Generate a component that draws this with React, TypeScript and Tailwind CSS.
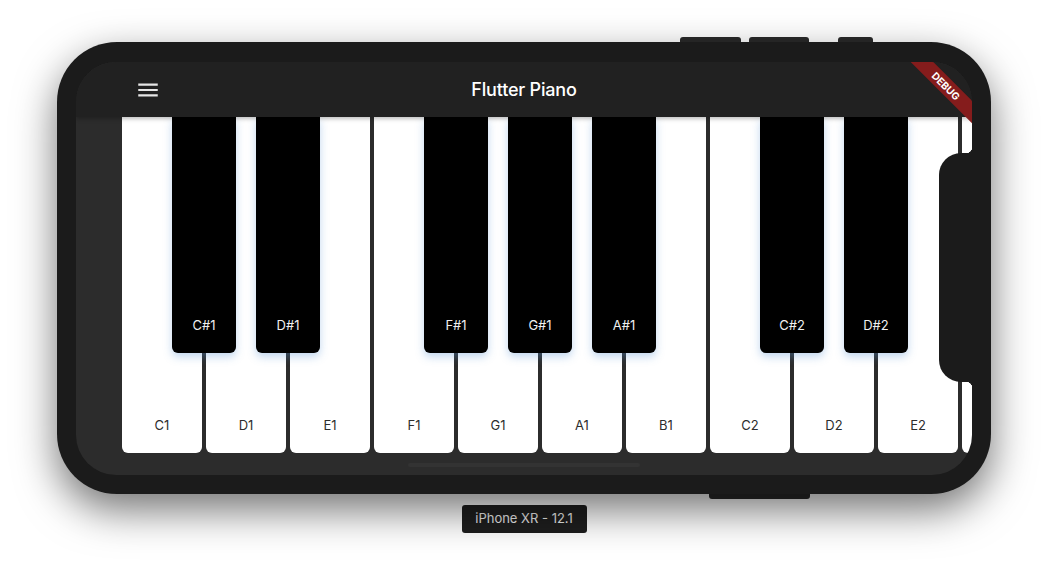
const whites = ["C1", "D1", "E1", "F1", "G1", "A1", "B1", "C2", "D2", "E2", ""]
const blacks: Record<string, string> = {
    C1: "C#1",
    D1: "D#1",
    F1: "F#1",
    G1: "G#1",
    A1: "A#1",
    C2: "C#2",
    D2: "D#2",
}

const MenuIcon = () => (
    <svg width="26" height="26" viewBox="0 0 24 24" fill="#e6e6e6">
        <path d="M3 18h18v-2H3v2zm0-5h18v-2H3v2zm0-7v2h18V6H3z"/>
    </svg>
)

const WhiteKey = ({note}: { note: string }) => {
    const sharp = blacks[note]
    return (
        <div className="relative w-[80px] h-[336px] shrink-0 bg-white rounded-b-[6px] flex items-end justify-center pb-[20px]">
            <span className="text-[13px] leading-4 text-[#2d2d2d]">{note}</span>
            {sharp &&
                <div
                    className="absolute top-0 left-[50px] z-10 w-[64px] h-[236px] bg-black rounded-b-[6px] flex items-end justify-center pb-[20px] shadow-[0_4px_8px_rgba(80,140,210,0.35)]">
                    <span className="text-[13px] leading-4 text-[#f0f0f0]">{sharp}</span>
                </div>
            }
        </div>
    )
}

const App = () => {
    return (
        <div className="w-[1048px] h-[584px] bg-white overflow-hidden pt-[42px] pl-[57px]"
             style={{fontFamily: "Inter, Roboto, 'Noto Sans', sans-serif"}}>
            <div className="relative w-[934px] h-[452px]">
                {/* side buttons */}
                <div className="absolute top-[-5px] left-[623px] w-[61px] h-[6px] bg-[#2a2a2a] rounded-t-[3px]"/>
                <div className="absolute top-[-5px] left-[692px] w-[60px] h-[6px] bg-[#2a2a2a] rounded-t-[3px]"/>
                <div className="absolute top-[-5px] left-[781px] w-[35px] h-[6px] bg-[#2a2a2a] rounded-t-[3px]"/>
                <div className="absolute bottom-[-5px] left-[652px] w-[101px] h-[6px] bg-[#2a2a2a] rounded-b-[3px]"/>

                <div
                    className="relative w-full h-full bg-[#1b1b1b] rounded-[60px] pt-[20px] pl-[19px] pr-[19px] pb-[19px] shadow-[0_16px_42px_rgba(0,0,0,0.55)]">
                    <div className="relative w-full h-full rounded-[40px] overflow-hidden bg-[#2c2c2c] flex flex-col">
                        <div className="relative h-[55px] shrink-0 bg-[#212121] flex items-center shadow-[0_2px_4px_rgba(0,0,0,0.25)] z-20">
                            <div className="ml-[59px] flex">
                                <MenuIcon/>
                            </div>
                            <div className="absolute inset-0 flex items-center justify-center">
                                <span className="text-[18px] font-medium text-white tracking-[-0.2px]">Flutter Piano</span>
                            </div>
                            <div className="absolute top-0 right-0 w-[80px] h-[80px] overflow-hidden">
                                <div
                                    className="absolute left-[4px] top-[16px] w-[100px] h-[16px] rotate-45 bg-[#851c1c] flex items-center justify-center">
                                    <span className="text-[10px] leading-none font-bold text-white">DEBUG</span>
                                </div>
                            </div>
                        </div>

                        <div className="flex-1 flex gap-1 pl-[46px] overflow-hidden">
                            {whites.map((n, i) => <WhiteKey key={i} note={n}/>)}
                        </div>

                        <div className="absolute bottom-[8px] left-1/2 -translate-x-1/2 w-[232px] h-[4px] rounded-full bg-[#333333]"/>

                        {/* notch */}
                        <div className="absolute right-0 top-[91px] w-[33px] h-[229px] bg-[#1b1b1b] rounded-l-[22px] z-30">
                            <div
                                className="absolute right-0 top-[-6px] w-[6px] h-[6px] bg-[radial-gradient(circle_at_0_0,transparent_6px,#1b1b1b_6.5px)]"/>
                            <div
                                className="absolute right-0 bottom-[-6px] w-[6px] h-[6px] bg-[radial-gradient(circle_at_0_100%,transparent_6px,#1b1b1b_6.5px)]"/>
                        </div>
                    </div>
                </div>
            </div>

            <div className="flex justify-center pr-[57px] mt-[11px]">
                <div className="w-[125px] h-[28px] bg-[#1e1e1e] rounded-[3px] flex items-center justify-center">
                    <span className="text-[13px] text-[#ececec]">iPhone XR - 12.1</span>
                </div>
            </div>
        </div>
    );
};

export default App;
